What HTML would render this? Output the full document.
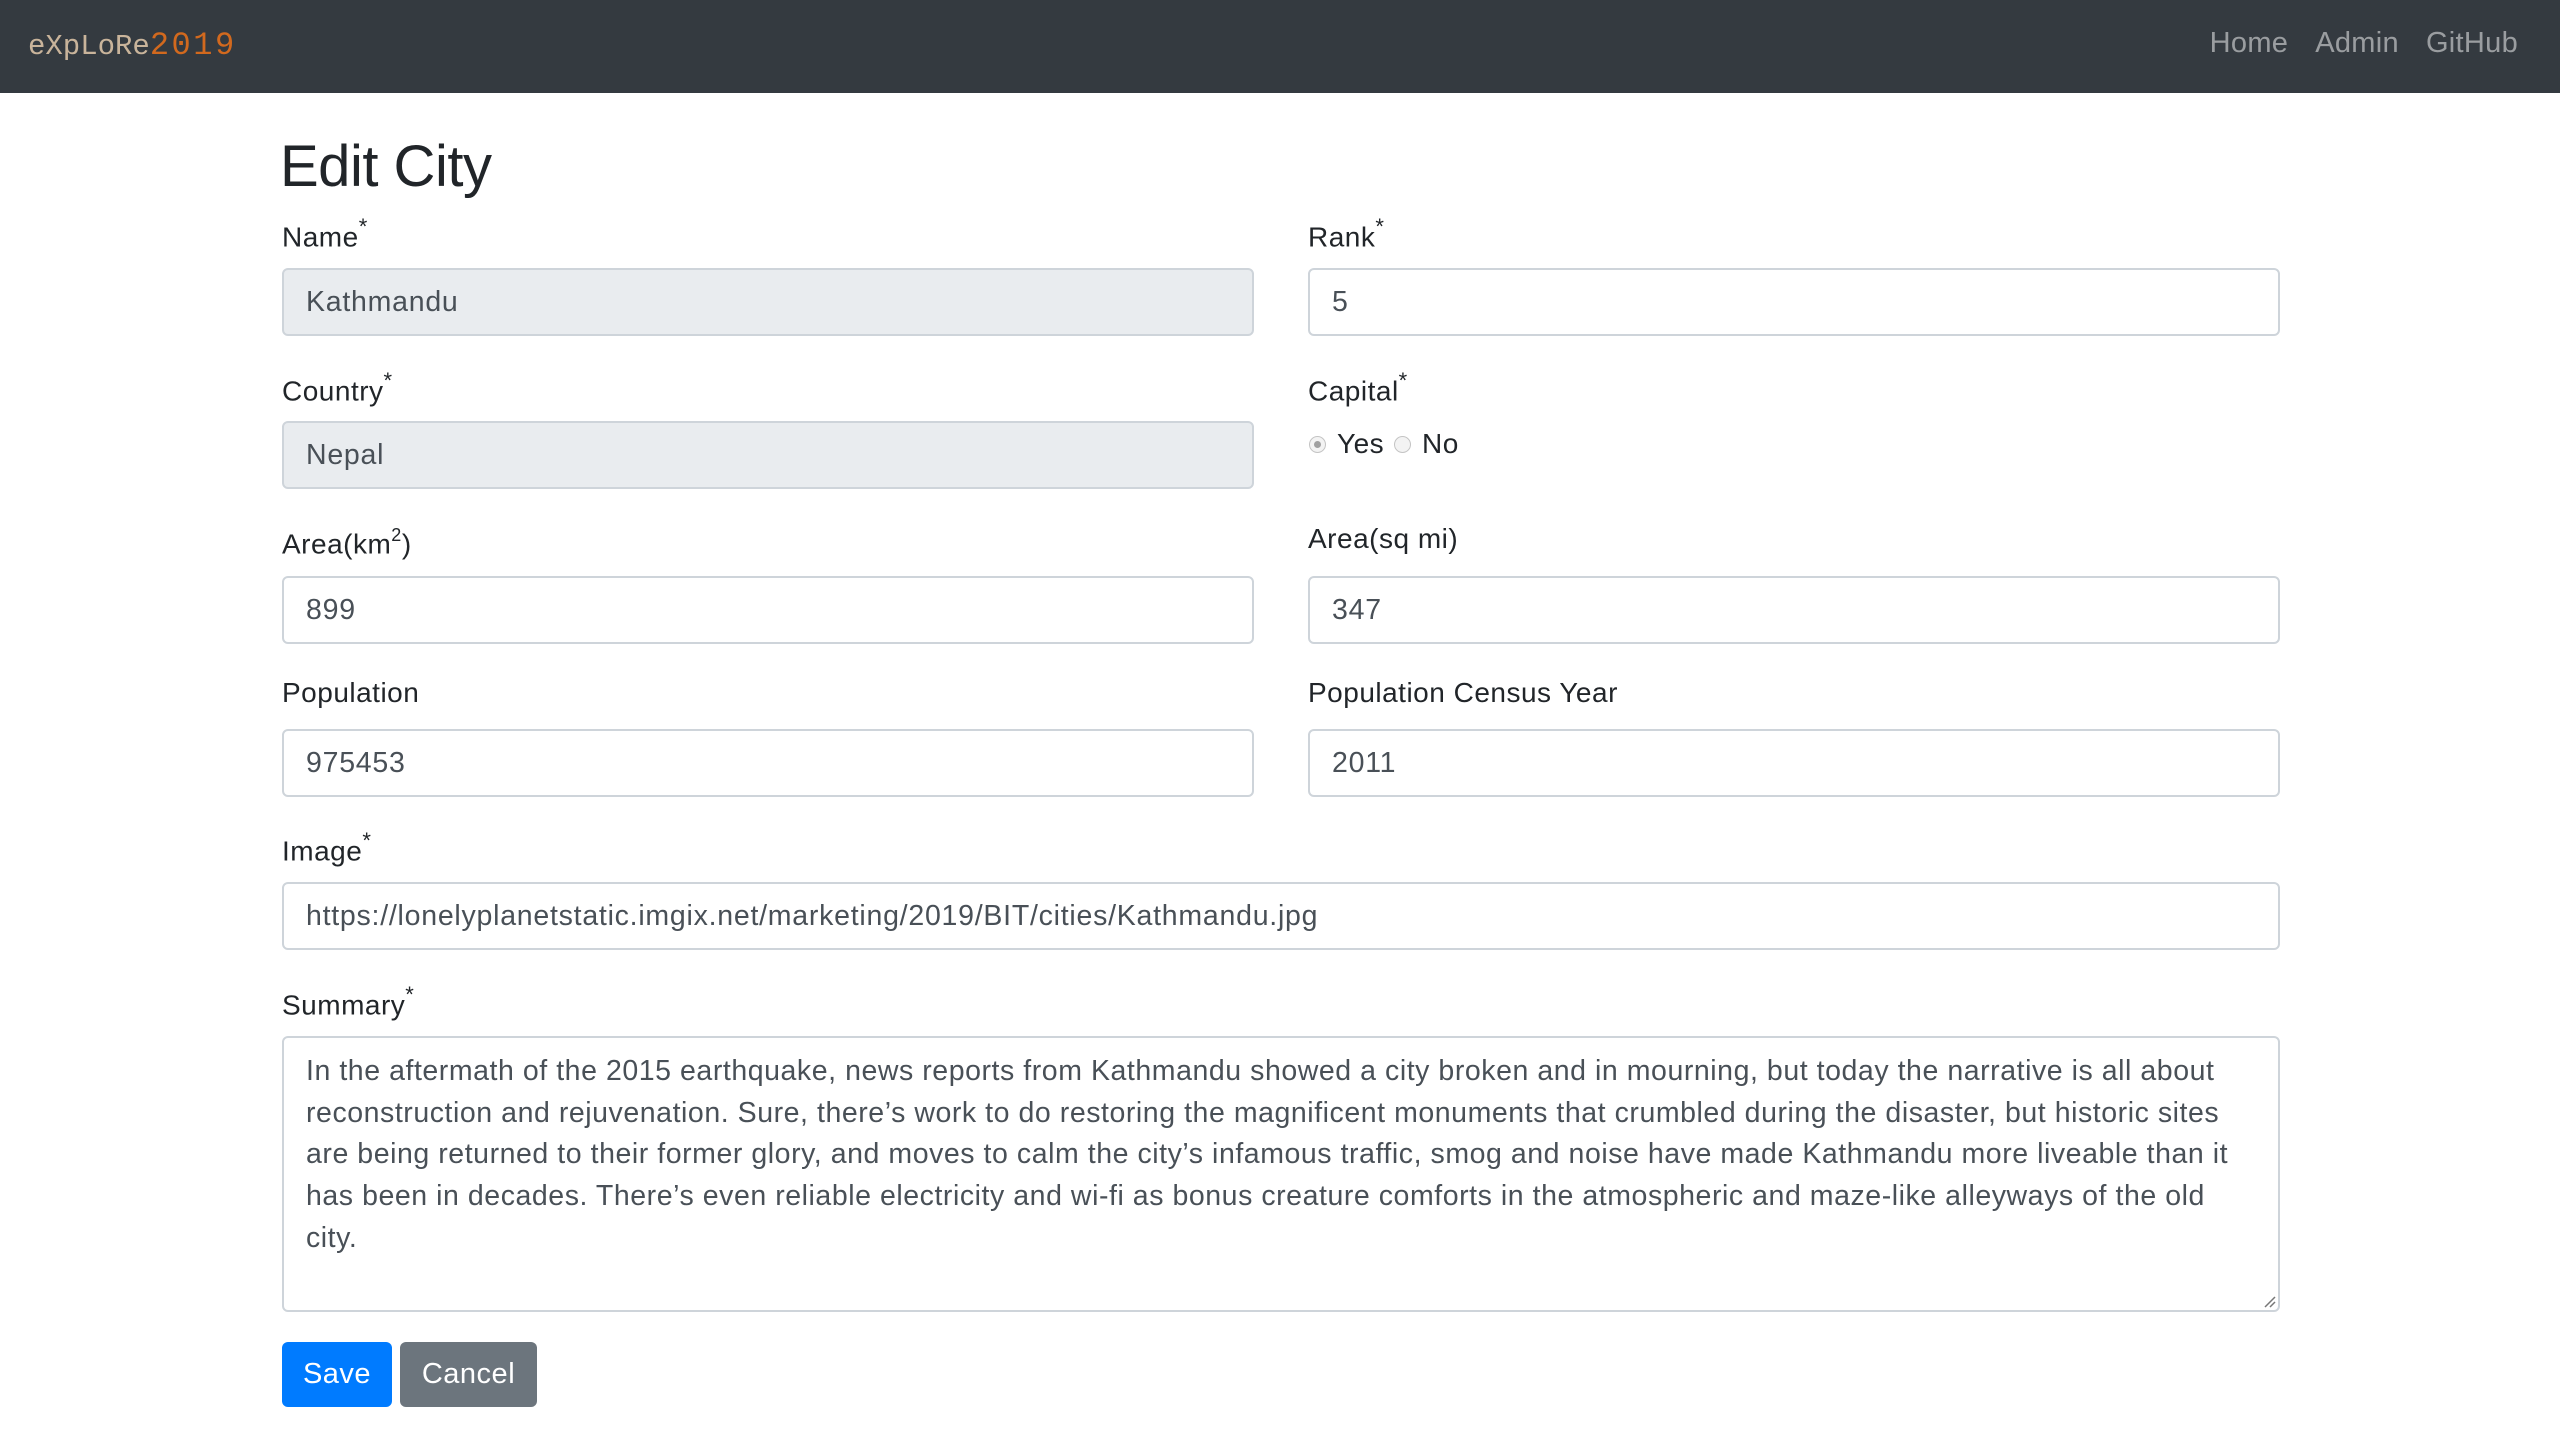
<!DOCTYPE html>
<html><head><meta charset="utf-8"><style>
*{box-sizing:border-box;margin:0;padding:0}
body{width:2560px;height:1434px;background:#fff;font-family:"Liberation Sans",Arial,sans-serif;color:#212529;position:relative;overflow:hidden}
.nav{position:absolute;left:0;top:0;width:2560px;height:93px;background:#343a40}
.logo{position:absolute;left:28px;top:27px;font-family:"Liberation Mono",monospace;font-size:29px;color:#c9b49b}
.logo span{color:#d2691e;font-size:32px;letter-spacing:2.5px}
.links{position:absolute;right:42px;top:27px;font-size:29px;letter-spacing:0.3px;color:rgba(255,255,255,.5)}
.links span{margin-left:27px}
h1{position:absolute;left:280px;top:133px;font-size:58px;font-weight:500;letter-spacing:-0.5px}
.lbl{position:absolute;font-size:28px;line-height:32px;letter-spacing:0.5px}
.lbl sup{font-size:22px;position:relative;top:-2px}
.inp{position:absolute;height:68px;border:2px solid #ced4da;border-radius:6px;font-size:28.5px;letter-spacing:0.75px;color:#495057;padding:0 22px;line-height:64px;background:#fff}
.dis{background:#e9ecef}
.L{left:282px;width:972px}.R{left:1308px;width:972px}
.radio{position:absolute;width:17px;height:17px;border:1.5px solid #c4c4c4;border-radius:50%;background:#f3f3f3}
.radio.on::after{content:"";position:absolute;left:3.5px;top:3.5px;width:7px;height:7px;border-radius:50%;background:#a0a0a0}
.ta{position:absolute;left:282px;top:1036px;width:1998px;height:276px;border:2px solid #ced4da;border-radius:6px;font-size:28.5px;letter-spacing:0.55px;line-height:41.7px;color:#495057;padding:13px 22px}
.btn{position:absolute;top:1342px;height:65px;border-radius:6px;color:#fff;font-size:29px;letter-spacing:0.5px;line-height:65px;text-align:center}
</style></head><body>
<div class="nav"><div class="logo">eXpLoRe<span>2019</span></div>
<div class="links"><span>Home</span><span>Admin</span><span>GitHub</span></div></div>
<h1>Edit City</h1>
<div class="lbl" style="left:282px;top:213px">Name<sup>*</sup></div>
<div class="lbl" style="left:1308px;top:213px">Rank<sup>*</sup></div>
<div class="inp L dis" style="top:268px">Kathmandu</div>
<div class="inp R" style="top:268px">5</div>
<div class="lbl" style="left:282px;top:367px">Country<sup>*</sup></div>
<div class="lbl" style="left:1308px;top:367px">Capital<sup>*</sup></div>
<div class="inp L dis" style="top:421px">Nepal</div>
<div class="radio on" style="left:1309px;top:436px"></div>
<div class="lbl" style="left:1337px;top:428px">Yes</div>
<div class="radio" style="left:1394px;top:436px"></div>
<div class="lbl" style="left:1422px;top:428px">No</div>
<div class="lbl" style="left:282px;top:521px">Area(km<sup style="font-size:18px">2</sup>)</div>
<div class="lbl" style="left:1308px;top:523px">Area(sq mi)</div>
<div class="inp L" style="top:576px">899</div>
<div class="inp R" style="top:576px">347</div>
<div class="lbl" style="left:282px;top:677px">Population</div>
<div class="lbl" style="left:1308px;top:677px">Population Census Year</div>
<div class="inp L" style="top:729px">975453</div>
<div class="inp R" style="top:729px">2011</div>
<div class="lbl" style="left:282px;top:827px">Image<sup>*</sup></div>
<div class="inp" style="left:282px;width:1998px;top:882px">https://lonelyplanetstatic.imgix.net/marketing/2019/BIT/cities/Kathmandu.jpg</div>
<div class="lbl" style="left:282px;top:981px">Summary<sup>*</sup></div>
<div class="ta">In the aftermath of the 2015 earthquake, news reports from Kathmandu showed a city broken and in mourning, but today the narrative is all about reconstruction and rejuvenation. Sure, there’s work to do restoring the magnificent monuments that crumbled during the disaster, but historic sites are being returned to their former glory, and moves to calm the city’s infamous traffic, smog and noise have made Kathmandu more liveable than it has been in decades. There’s even reliable electricity and wi-fi as bonus creature comforts in the atmospheric and maze-like alleyways of the old city.
<svg style="position:absolute;right:2px;bottom:2px" width="14" height="14"><path d="M3 13L13 3M8 13L13 8" stroke="#777" stroke-width="1.5"/></svg></div>
<div class="btn" style="left:282px;width:110px;background:#007bff">Save</div>
<div class="btn" style="left:400px;width:137px;background:#6c757d">Cancel</div>
</body></html>
